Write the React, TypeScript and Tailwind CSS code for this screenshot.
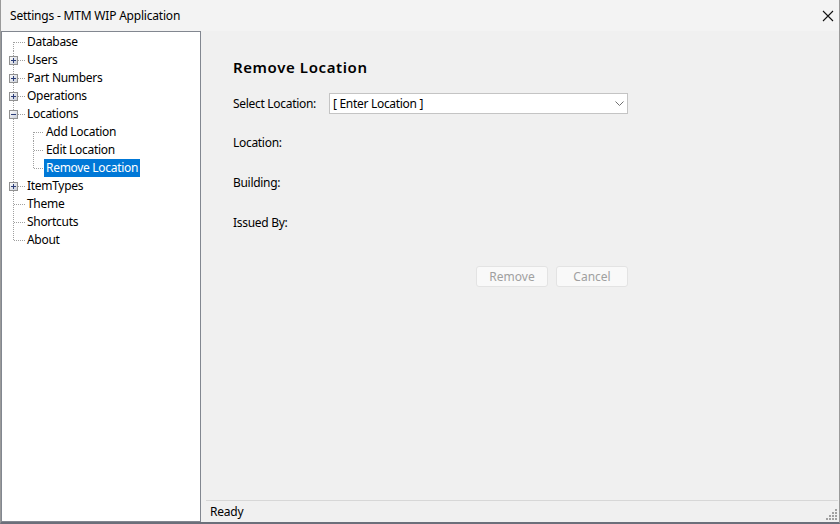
import React from "react";

type Node = {
  label: string;
  level: 0 | 1;
  box?: "plus" | "minus";
  // root vertical line: "first" | "mid" | "last"
  root: "first" | "mid" | "last";
  child?: "first" | "mid" | "last";
  selected?: boolean;
};

const nodes: Node[] = [
  { label: "Database", level: 0, root: "first" },
  { label: "Users", level: 0, box: "plus", root: "mid" },
  { label: "Part Numbers", level: 0, box: "plus", root: "mid" },
  { label: "Operations", level: 0, box: "plus", root: "mid" },
  { label: "Locations", level: 0, box: "minus", root: "mid" },
  { label: "Add Location", level: 1, root: "mid", child: "first" },
  { label: "Edit Location", level: 1, root: "mid", child: "mid" },
  { label: "Remove Location", level: 1, root: "mid", child: "last", selected: true },
  { label: "ItemTypes", level: 0, box: "plus", root: "mid" },
  { label: "Theme", level: 0, root: "mid" },
  { label: "Shortcuts", level: 0, root: "mid" },
  { label: "About", level: 0, root: "last" },
];

const dot = { stroke: "#a0a0a0", strokeWidth: 1, strokeDasharray: "1 1" };

function vLine(x: number, kind: "first" | "mid" | "last", gap: boolean) {
  const segs: [number, number][] = [];
  const top = kind === "first" ? 9 : 0;
  const bottom = kind === "last" ? 9 : 18;
  if (gap) {
    if (top < 5) segs.push([top, 5]);
    if (bottom > 14) segs.push([14, bottom]);
  } else {
    segs.push([top, bottom]);
  }
  return segs.map(([a, b], i) => (
    <line key={x + "-" + i} x1={x + 0.5} x2={x + 0.5} y1={a} y2={b} {...dot} />
  ));
}

function Connector({ n }: { n: Node }) {
  const w = n.level === 0 ? 23 : 42;
  return (
    <svg width={w} height={18} className="shrink-0">
      {vLine(11, n.root, !!n.box)}
      {n.level === 0 ? (
        <line x1={n.box ? 16 : 12} x2={23} y1={9.5} y2={9.5} {...dot} />
      ) : (
        <>
          {vLine(31, n.child!, false)}
          <line x1={32} x2={42} y1={9.5} y2={9.5} {...dot} />
        </>
      )}
      {n.box && (
        <>
          <defs>
            <linearGradient id="bx" x1="0" y1="0" x2="1" y2="1">
              <stop offset="0" stopColor="#ffffff" />
              <stop offset="1" stopColor="#c6cbd6" />
            </linearGradient>
          </defs>
          <rect x={7.5} y={5.5} width={8} height={8} fill="url(#bx)" stroke="#919191" />
          <line x1={9} x2={14} y1={9.5} y2={9.5} stroke="#2c3e78" />
          {n.box === "plus" && <line x1={11.5} x2={11.5} y1={7} y2={12} stroke="#2c3e78" />}
        </>
      )}
    </svg>
  );
}

export default function App() {
  return (
    <div
      className="w-[840px] h-[524px] flex flex-col bg-[#f0f0f0] text-[12px] text-black border-x border-b-2 border-x-[#9a9a9a] border-b-[#6b6f7a] overflow-hidden"
      style={{ fontFamily: "'Noto Sans', 'Open Sans', sans-serif" }}
    >
      {/* Title bar */}
      <div className="h-[31px] shrink-0 bg-[#f3f3f3] flex items-center justify-between pl-[9px] pr-[5px]">
        <span className="text-[12px] tracking-[-0.2px]">Settings - MTM WIP Application</span>
        <svg width="12" height="12" viewBox="0 0 12 12" className="mr-[0px]">
          <path d="M1 1 L11 11 M11 1 L1 11" stroke="#111" strokeWidth="1.1" />
        </svg>
      </div>

      <div className="flex flex-1 min-h-0">
        {/* Tree */}
        <div className="w-[200px] shrink-0 bg-white border border-[#828790] pt-[1px]">
          {nodes.map((n) => (
            <div key={n.label} className="flex items-center h-[18px]">
              <Connector n={n} />
              <span
                className={
                  "h-[18px] leading-[18px] px-[2px] tracking-[-0.3px] " +
                  (n.selected ? "bg-[#0078d7] text-white" : "")
                }
              >
                {n.label}
              </span>
            </div>
          ))}
        </div>

        {/* Content */}
        <div className="flex-1 flex flex-col min-w-0">
          <div className="ml-[32px] w-[395px] flex flex-col">
            <h1 className="mt-[26px] text-[15px] leading-[20px] font-semibold tracking-[0.6px]">Remove Location</h1>
            <div className="mt-[16px] flex items-center h-[21px]">
              <span className="w-[96px] tracking-[-0.3px]">Select Location:</span>
              <div className="flex-1 h-[21px] bg-white border border-[#c4c4c4] flex items-center justify-between pl-[3px] pr-[3px]">
                <span className="tracking-[-0.3px]">[ Enter Location ]</span>
                <svg width="9" height="5" viewBox="0 0 9 5">
                  <path d="M0.5 0.5 L4.5 4.5 L8.5 0.5" stroke="#707070" fill="none" />
                </svg>
              </div>
            </div>
            <div className="mt-[21px] h-[16px] leading-[16px] tracking-[-0.3px]">Location:</div>
            <div className="mt-[24px] h-[16px] leading-[16px] tracking-[-0.3px]">Building:</div>
            <div className="mt-[24px] h-[16px] leading-[16px] tracking-[-0.3px]">Issued By:</div>
            <div className="mt-[35px] flex justify-end gap-[8px]">
              <button className="w-[72px] h-[21px] bg-[#f9f9f9] border border-[#e3e3e3] rounded-[3px] text-[#a0a0a0] text-[12px]">
                Remove
              </button>
              <button className="w-[72px] h-[21px] bg-[#f9f9f9] border border-[#e3e3e3] rounded-[3px] text-[#a0a0a0] text-[12px]">
                Cancel
              </button>
            </div>
          </div>
          <div className="flex-1" />
          {/* Status bar */}
          <div className="ml-[5px] mr-[1px] h-[22px] border-t border-[#d7d7d7] flex items-center justify-between pl-[4px]">
            <span className="tracking-[-0.2px]">Ready</span>
            <svg width="12" height="12" viewBox="0 0 12 12" className="self-end mb-[2px]">
              {[
                [9, 1],
                [6, 4],
                [9, 4],
                [3, 7],
                [6, 7],
                [9, 7],
                [0, 10],
                [3, 10],
                [6, 10],
                [9, 10],
              ].map(([x, y]) => (
                <rect key={x + "-" + y} x={x} y={y} width={2} height={2} fill="#a0a0a0" />
              ))}
            </svg>
          </div>
        </div>
      </div>
    </div>
  );
}
